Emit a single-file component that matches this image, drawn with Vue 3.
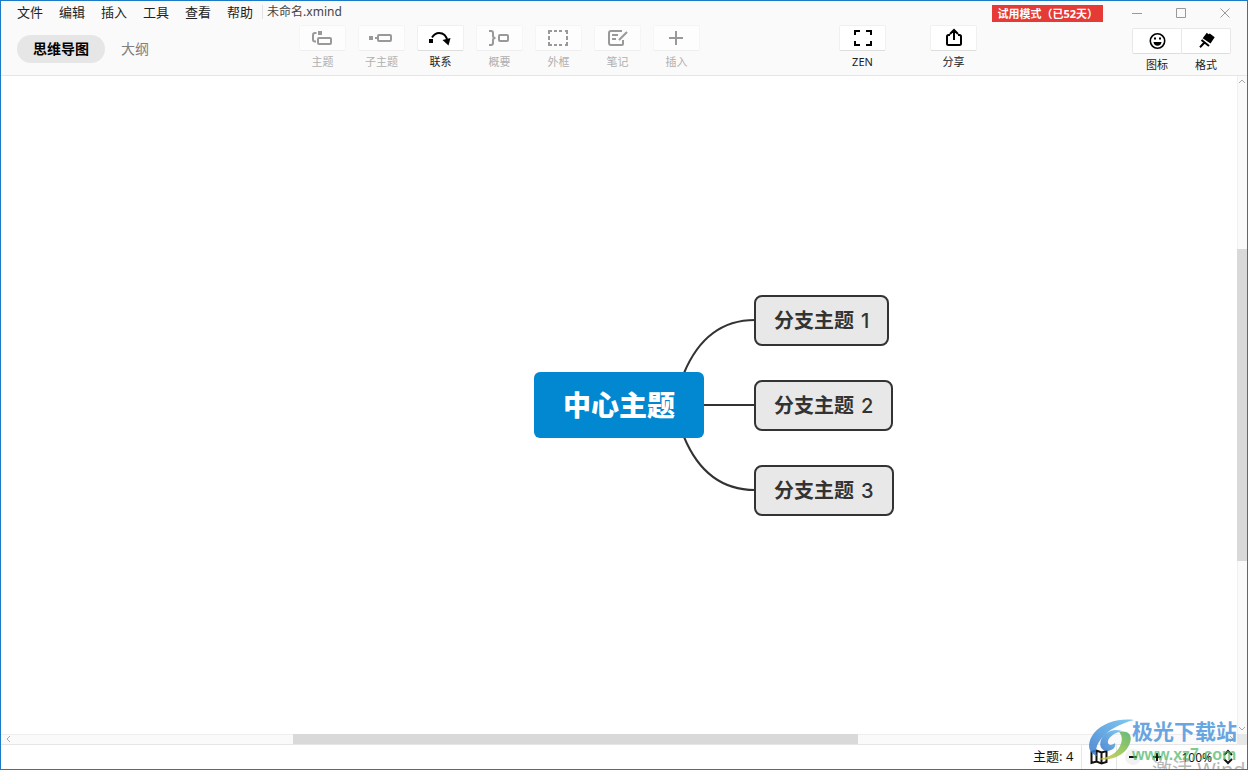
<script setup>
const menus = ['文件', '编辑', '插入', '工具', '查看', '帮助']

const tools = [
  { id: 'topic', label: '主题', active: false },
  { id: 'subtopic', label: '子主题', active: false },
  { id: 'relation', label: '联系', active: true },
  { id: 'summary', label: '概要', active: false },
  { id: 'boundary', label: '外框', active: false },
  { id: 'note', label: '笔记', active: false },
  { id: 'insert', label: '插入', active: false },
]

const branches = [
  { n: 1, title: '分支主题' },
  { n: 2, title: '分支主题' },
  { n: 3, title: '分支主题' },
]
</script>

<template>
  <div class="window">
    <header class="header">
      <div class="titlebar">
        <nav class="menus">
          <button v-for="m in menus" :key="m" class="menu">{{ m }}</button>
        </nav>
        <span class="filename">未命名.xmind</span>
        <span class="trial">试用模式（已52天）</span>
        <div class="controls">
          <button aria-label="最小化"><svg width="12" height="12"><path d="M1 6.500h10" /></svg></button>
          <button aria-label="最大化"><svg width="12" height="12"><path d="M1.500 1.500h9v9h-9z" /></svg></button>
          <button aria-label="关闭"><svg width="12" height="12"><path d="M1.500 1.500l9 9M10.500 1.500l-9 9" /></svg></button>
        </div>
      </div>

      <div class="toolbar">
        <div class="tabs">
          <button class="tab selected">思维导图</button>
          <button class="tab">大纲</button>
        </div>
        <div class="tools">
          <button v-for="t in tools" :key="t.id" class="tool" :class="{ off: !t.active }" :disabled="!t.active">
            <span class="face">
              <svg class="icon" viewBox="0 0 25 24">
                <template v-if="t.id === 'topic'">
                  <path d="M8 5h4v4H8z" class="solid" />
                  <path d="M6.500 7H5a2 2 0 0 0-2 2v4.500a2 2 0 0 0 2 2h1" />
                  <rect x="8" y="12" width="13" height="6" rx="1" />
                </template>
                <template v-else-if="t.id === 'subtopic'">
                  <path d="M0 10h4v4H0z" class="solid" />
                  <path d="M6 12h3" />
                  <rect x="9" y="9" width="13" height="6" rx="1" />
                </template>
                <template v-else-if="t.id === 'relation'">
                  <path d="M1 13h4v4H1z" class="solid" />
                  <path d="M4 11.500C6 8.500 8.500 7 11 7c4.500 0 7.500 3 8.500 8" />
                  <path d="M14.500 14l8-2-2 7.500z" class="solid" />
                </template>
                <template v-else-if="t.id === 'summary'">
                  <path d="M2 5h2q2 0 2 2v3q0 2 2.500 2Q6 12 6 14v3q0 2-2 2H2" />
                  <rect x="12" y="9" width="9" height="6" rx="1" />
                </template>
                <template v-else-if="t.id === 'boundary'">
                  <path d="M3 8V5h3M19 5h2v3M21 16v3h-2M6 19H3v-3M8 5h3M13 5h3M8 19h3M13 19h3M3 10v4M21 10v4" />
                </template>
                <template v-else-if="t.id === 'note'">
                  <path d="M17 5H6a2 2 0 0 0-2 2v10a2 2 0 0 0 2 2h11a1 1 0 0 0 1-1v-4M7 9h6M7 13h4M22 6l-8 8" />
                </template>
                <path v-else d="M12 5v14M5 12h14" />
              </svg>
            </span>
            <span class="caption">{{ t.label }}</span>
          </button>
        </div>
        <div class="tools wide">
          <button class="tool">
            <span class="face">
              <svg class="icon" viewBox="0 0 25 24"><path d="M5 9V5h5M16 5h5v4M21 15v4h-5M10 19H5v-4" /></svg>
            </span>
            <span class="caption">ZEN</span>
          </button>
          <button class="tool">
            <span class="face">
              <svg class="icon" viewBox="0 0 25 24"><path d="M9 9H7.500Q6 9 6 10.500v7Q6 19 7.500 19h11q1.500 0 1.500-1.500v-7Q20 9 18.500 9H17M13 14V4M9 8l4-4 4 4" /></svg>
            </span>
            <span class="caption">分享</span>
          </button>
        </div>
        <div class="panels">
          <button class="tool">
            <span class="face">
              <svg class="icon" viewBox="0 0 25 24">
                <circle cx="12.500" cy="12" r="7.200" stroke-width="1.600" />
                <path d="M9 8.500h2v2H9zM14 8.500h2v2h-2zM8.500 13h8q-0.500 3.800-4 3.800t-4-3.800z" class="solid" />
              </svg>
            </span>
            <span class="caption">图标</span>
          </button>
          <button class="tool">
            <span class="face">
              <svg class="icon" viewBox="0 0 25 24">
                <path d="M12.800 3.800l1.700 1.400 1.300-0.700 4.900 3.800-4.200 6.200-7.800-5.300z" class="solid" />
                <path d="M7.500 11l7.500 6M10.500 13.500l-4.500 4.700" />
              </svg>
            </span>
            <span class="caption">格式</span>
          </button>
        </div>
      </div>
    </header>

    <main class="workspace">
      <div class="canvas">
        <div class="map">
          <svg class="links" width="1" height="1">
            <path d="M65 -32C80 -68 104 -85 136 -85M84 0H136M65 32C80 68 104 85 136 85" />
          </svg>
          <div class="node central">中心主题</div>
          <div v-for="b in branches" :key="b.n" class="node branch" :class="'b' + b.n">
            {{ b.title }} <span class="num">{{ b.n }}</span>
          </div>
        </div>
      </div>
      <div class="vscroll">
        <svg width="10" height="10"><path d="M2 7l3-3 3 3" /></svg>
        <div class="track"><div class="thumb"></div></div>
        <svg width="10" height="10"><path d="M2 3l3 3 3-3" /></svg>
      </div>
      <div class="hscroll">
        <svg width="10" height="10"><path d="M7 2L4 5l3 3" /></svg>
        <div class="track"><div class="thumb"></div></div>
        <svg width="10" height="10"><path d="M3 2l3 3-3 3" /></svg>
      </div>
      <div class="corner"></div>
    </main>

    <footer class="status">
      <span class="count">主题: 4</span>
      <button class="mapbtn" aria-label="导航图">
        <svg width="18" height="16"><path d="M1.500 3l5-1.500 5 2 5-1.500v11l-5 1.500-5-2-5 1.500zM6.500 2v10.500M11.500 4v10.500" /></svg>
      </button>
      <button class="round" aria-label="缩小"><svg width="10" height="10"><path d="M1 5h8" /></svg></button>
      <button class="round plain" aria-label="放大"><svg width="10" height="10"><path d="M1 5h8M5 1v8" /></svg></button>
      <button class="percent">100%<svg width="10" height="16"><path d="M1 6l4-4 4 4M1 10l4 4 4-4" /></svg></button>
    </footer>

    <div class="watermark">
      <div class="activate">激活 Windows</div>
      <svg class="swirl" viewBox="0 0 54 44">
        <defs>
          <linearGradient id="sky" x1="0" y1="1" x2="1" y2="0">
            <stop offset="0" stop-color="#3578cc" />
            <stop offset="1" stop-color="#6cc0f0" />
          </linearGradient>
          <linearGradient id="leaf" x1="0" y1="1" x2="1" y2="0">
            <stop offset="0" stop-color="#dccb45" />
            <stop offset="0.600" stop-color="#7fbf50" />
            <stop offset="1" stop-color="#4fae68" />
          </linearGradient>
        </defs>
        <path fill="url(#sky)" d="M46 3C33 1 15 5 6 16c-7 9-7 20 3 23-2-4-1-11 4-17C20 13 31 7 46 3z" />
        <path fill="url(#sky)" d="M34 14c-10-3-18 2-21 9-3 8 3 13 10 10 3-1 5-4 4-7-2 2-6 3-7 0-1-5 6-10 14-12z" />
        <path fill="url(#leaf)" d="M31 15c13-3 15 8 7 18-7 8-19 11-29 9 12-1 20-6 23-13 3-6 2-11-1-14z" />
      </svg>
      <div class="site">
        <div class="brand">极光下载站</div>
        <div class="url">www.xz7.com</div>
      </div>
    </div>
  </div>
</template>

<style>
html,
body,
#app {
  height: 100%;
}
body {
  margin: 0;
}
</style>

<style scoped>
.window {
  position: relative;
  box-sizing: border-box;
  height: 100%;
  display: flex;
  flex-direction: column;
  overflow: hidden;
  border: 1px solid #1c7bc8;
  background: #fff;
  color: #222;
  font-family: "Noto Sans", "Noto Sans CJK SC", sans-serif;
  font-size: 13px;
}
button {
  margin: 0;
  padding: 0;
  border: 0;
  background: none;
  color: inherit;
  font: inherit;
}
svg {
  display: block;
  flex: none;
  fill: none;
  stroke: currentColor;
}
.header {
  background: #fafafa;
  border-bottom: 1px solid #e6e6e6;
}
.titlebar {
  display: flex;
  align-items: center;
  height: 24px;
  padding: 0 16px;
}
.menus {
  display: flex;
  gap: 16px;
  height: 24px;
}
.menu {
  height: 22px;
  line-height: 20px;
}
.filename {
  align-self: flex-start;
  margin: 4px 0 0 9px;
  padding-left: 4px;
  border-left: 1px solid #e2e2e2;
  font-size: 12px;
  line-height: 14px;
  color: #444;
}
.trial {
  margin-left: auto;
  padding: 0 5px;
  background: #e53a35;
  color: #fff;
  font-size: 11px;
  font-weight: 700;
  line-height: 17px;
}
.controls {
  display: flex;
  align-items: center;
  gap: 32px;
  margin-left: 28px;
  color: #999;
  height: 22px;
}
.toolbar {
  display: flex;
  align-items: flex-start;
  height: 50px;
  padding: 0 16px;
}
.tabs {
  display: flex;
  width: 282px;
  padding-top: 10px;
  font-size: 14px;
}
.tab {
  padding: 0 16px;
  border-radius: 14px;
  line-height: 28px;
  color: #808080;
}
.selected {
  background: #e6e6e6;
  color: #000;
  font-weight: 700;
}
.tools {
  display: flex;
  gap: 12px;
}
.wide {
  gap: 44px;
  margin: 0 auto;
  padding-right: 16px;
}
.tool {
  display: flex;
  flex-direction: column;
  align-items: center;
  font-size: 11px;
  width: 47px;
}
.face {
  display: flex;
  justify-content: center;
  width: 100%;
  box-sizing: border-box;
  background: #fff;
  border: 1px solid #f0f0f0;
  border-bottom-color: #ddd;
  border-radius: 2px;
  color: #000;
}
.icon {
  width: 25px;
  height: 24px;
  stroke-width: 2;
}
.solid {
  fill: currentColor;
  stroke: none;
}
.caption {
  margin-top: 3px;
  line-height: 16px;
  white-space: nowrap;
}
.off {
  color: #b0b0b0;
}
.off .face {
  background: #fdfdfd;
  border-color: #f5f5f5;
  border-bottom-color: #eee;
  color: #999;
}
.panels {
  display: flex;
  padding-top: 3px;
}
.panels .tool {
  width: 50px;
}
.panels .tool + .tool {
  margin-left: -1px;
}
.panels .face {
  border-color: #e8e8e8;
  border-bottom-color: #ddd;
}
.workspace {
  flex: 1;
  min-height: 0;
  display: grid;
  grid-template-columns: 1fr 10px;
  grid-template-rows: 1fr 11px;
}
.canvas {
  position: relative;
  overflow: hidden;
}
.map {
  position: absolute;
  left: 50%;
  top: 50%;
}
.links {
  position: absolute;
  left: 0;
  top: 0;
  overflow: visible;
  stroke: #333;
  stroke-width: 2;
}
.node {
  position: absolute;
  box-sizing: border-box;
  white-space: nowrap;
}
.central {
  left: -85px;
  top: -33px;
  padding: 0 29px;
  border-radius: 6px;
  background: #0288d1;
  color: #fff;
  font-size: 28px;
  font-weight: 800;
  line-height: 66px;
}
.branch {
  left: 135px;
  padding: 1px 18px 0;
  border: 2px solid #333;
  border-radius: 8px;
  background: #e8e8e8;
  color: #333;
  font-family: Inter, "Noto Sans CJK SC", sans-serif;
  font-size: 20px;
  font-weight: 600;
  line-height: 46px;
}
.num {
  padding-left: 2px;
  font-weight: 500;
}
.b1 {
  top: -110px;
}
.b2 {
  top: -25px;
}
.b3 {
  top: 60px;
}
.vscroll,
.hscroll {
  display: flex;
  background: #fafafa;
  color: #aaa;
}
.vscroll {
  flex-direction: column;
  box-shadow: inset 1px 0 #f0f0f0;
}
.hscroll {
  box-sizing: border-box;
  box-shadow: inset 0 1px #eee;
  border-bottom: 1px solid #e6e6e6;
  padding-left: 2px;
}
.track {
  flex: 1;
  display: flex;
}
.thumb {
  background: #d9d9d9;
}
.vscroll .track {
  flex-direction: column;
  padding-top: 163px;
}
.vscroll .thumb {
  height: 312px;
}
.hscroll .track {
  padding-left: 280px;
}
.hscroll .thumb {
  width: 565px;
}
.corner {
  background: #e8e8e8;
}
.status {
  display: flex;
  align-items: center;
  height: 24px;
  justify-content: flex-end;
  padding-right: 14px;
  color: #111;
}
.count {
  height: 20px;
  line-height: 18px;
  padding-right: 8px;
}
.mapbtn {
  align-self: stretch;
  display: flex;
  align-items: center;
  padding: 0 8px;
  border: solid #e6e6e6;
  border-width: 0 1px;
  margin-right: 8px;
}
.mapbtn svg,
.percent svg {
  stroke-width: 2;
}
.round {
  display: flex;
  align-items: center;
  justify-content: center;
  width: 16px;
  height: 16px;
  border-radius: 8px;
  background: #f2f2f2;
}
.round svg {
  stroke-width: 2;
}
.plain {
  margin: 0 16px 0 8px;
  background: none;
}
.percent {
  display: flex;
  align-items: center;
  gap: 11px;
  font-size: 12px;
}
.watermark {
  position: absolute;
  right: 10px;
  bottom: 0;
  display: flex;
  height: 52px;
  pointer-events: none;
}
.swirl {
  width: 54px;
  height: 44px;
  stroke: none;
  margin-right: -10px;
  opacity: 0.85;
}
.brand {
  color: #4f97dc;
  font-size: 21px;
  font-weight: 700;
  line-height: 28px;
  opacity: 0.85;
}
.url {
  color: #52b96c;
  font-family: "Liberation Sans", Arial, sans-serif;
  font-size: 16px;
  font-weight: 700;
  line-height: 20px;
  opacity: 0.75;
}
.activate {
  position: absolute;
  left: 64px;
  top: 40px;
  color: #999;
  font-size: 20px;
  line-height: 26px;
  white-space: nowrap;
  opacity: 0.7;
}
</style>
